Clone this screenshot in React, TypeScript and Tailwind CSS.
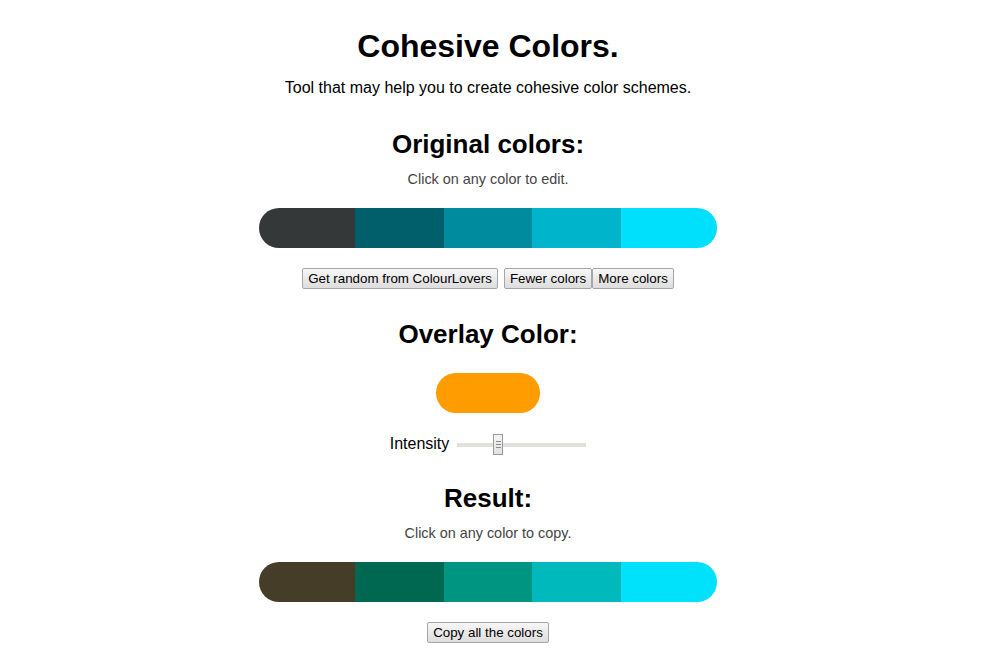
import React from "react";

const original = [
  { color: "#343838", w: "w-[96px]" },
  { color: "#005f6b", w: "w-[89px]" },
  { color: "#008c9e", w: "w-[88px]" },
  { color: "#00b4cc", w: "w-[89px]" },
  { color: "#00dffc", w: "w-[96px]" },
];

const result = [
  { color: "#463d29", w: "w-[96px]" },
  { color: "#006850", w: "w-[89px]" },
  { color: "#009580", w: "w-[88px]" },
  { color: "#00b9bd", w: "w-[89px]" },
  { color: "#00e1fb", w: "w-[96px]" },
];

const btn =
  "h-[21px] px-[5px] text-[13.33px] leading-[15px] text-black border border-[#a6a6a6] rounded-[2px] bg-gradient-to-b from-[#f7f7f7] to-[#dddddd]";

type Swatch = { color: string; w: string };

const ColorBar = ({ colors }: { colors: Swatch[] }) => (
  <div className="flex h-[40px] rounded-[20px] overflow-hidden">
    {colors.map((c) => (
      <div key={c.color} className={`${c.w} h-full cursor-pointer`} style={{ backgroundColor: c.color }} />
    ))}
  </div>
);

const App = () => {
  return (
    <div className="w-[976px] min-h-[660px] bg-white flex flex-col items-center font-['Liberation_Sans',Arial,sans-serif] text-black">
      <h1 className="mt-[28px] text-[32px] leading-[37px] font-bold">Cohesive Colors.</h1>
      <p className="mt-[14px] text-[16px] leading-[18px]">
        Tool that may help you to create cohesive color schemes.
      </p>

      <h2 className="mt-[32px] text-[26px] leading-[30px] font-bold">Original colors:</h2>
      <p className="mt-[12px] text-[14.4px] leading-[16px] text-[#444]">Click on any color to edit.</p>
      <div className="mt-[21px]">
        <ColorBar colors={original} />
      </div>
      <div className="mt-[20px] flex">
        <button className={btn}>Get random from ColourLovers</button>
        <button className={`${btn} ml-[6px]`}>Fewer colors</button>
        <button className={btn}>More colors</button>
      </div>

      <h2 className="mt-[30px] text-[26px] leading-[30px] font-bold">Overlay Color:</h2>
      <div className="mt-[24px] w-[104px] h-[40px] rounded-full bg-[#ff9c00]" />
      <div className="mt-[21px] flex items-center h-[21px]">
        <span className="text-[16px] leading-[18px] -mt-[2px]">Intensity</span>
        <div className="relative ml-[8px] w-[129px] h-[21px] flex items-center">
          <div className="w-full h-[4px] bg-[#e3e0dc]" />
          <div className="absolute left-[36px] top-0 w-[10px] h-[21px] border border-[#9a9a9a] bg-gradient-to-b from-[#f4f4f4] to-[#e2e2e2] flex flex-col items-center justify-center gap-[2px]">
            <div className="w-[5px] h-px bg-[#8a8a8a]" />
            <div className="w-[5px] h-px bg-[#8a8a8a]" />
            <div className="w-[5px] h-px bg-[#8a8a8a]" />
          </div>
        </div>
      </div>

      <h2 className="mt-[28px] text-[26px] leading-[30px] font-bold">Result:</h2>
      <p className="mt-[12px] text-[14.4px] leading-[16px] text-[#444]">Click on any color to copy.</p>
      <div className="mt-[21px]">
        <ColorBar colors={result} />
      </div>
      <div className="mt-[20px] flex">
        <button className={btn}>Copy all the colors</button>
      </div>
    </div>
  );
};

export default App;
